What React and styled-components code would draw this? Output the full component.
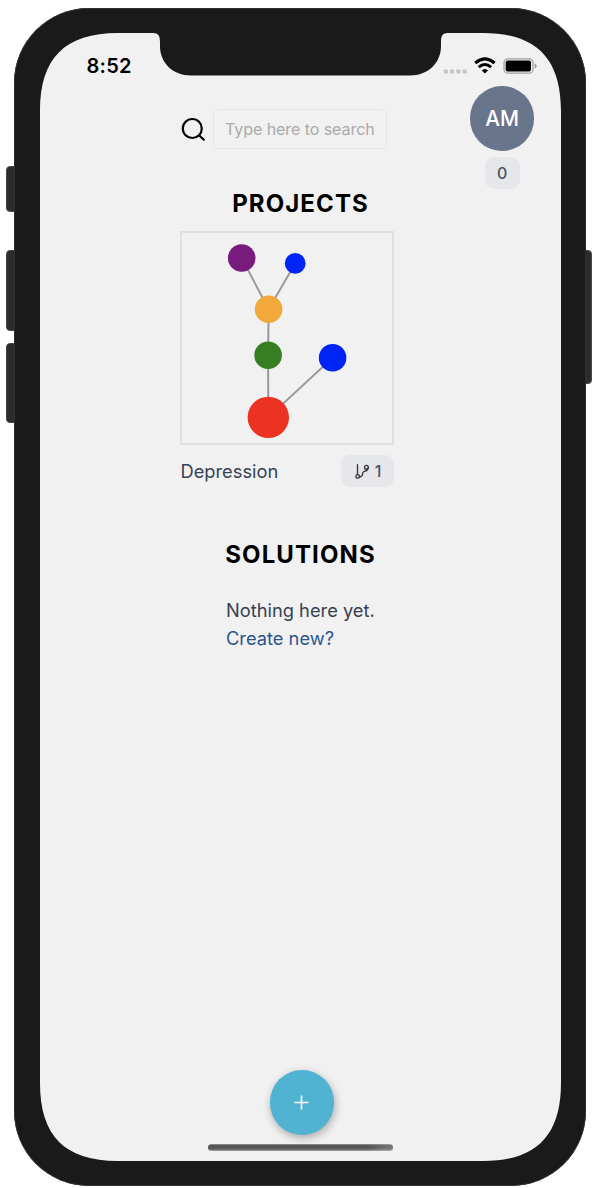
import React from "react";
import styled, { createGlobalStyle } from "styled-components";

const GlobalStyle = createGlobalStyle`
  *, *::before, *::after { box-sizing: border-box; }
  body { margin: 0; background: #fff; font-family: Inter, "Liberation Sans", sans-serif; }
`;

const Stage = styled.main`
  position: relative;
  width: 600px;
  height: 1188px;
  padding: 8px 14.3px 0;
  overflow: hidden;
`;

const SideButton = styled.span`
  position: absolute;
  top: ${(p) => p.$top}px;
  ${(p) => p.$side}: ${(p) => (p.$side === "left" ? 6.3 : 7.6)}px;
  width: 14px;
  height: ${(p) => p.$height}px;
  border: 1px solid #484848;
  border-radius: 4px;
  background: #2c2c2c;
`;

const Bezel = styled.div`
  position: relative;
  width: 571.4px;
  height: 1177.500px;
  padding: 25px 0 0 25.7px;
  border-radius: 75px;
  background: #1a1a1a;
  box-shadow: inset 0 0 0 0.7px #3a3a3a;
`;

const Screen = styled.div`
  display: flex;
  flex-direction: column;
  width: 521px;
  height: 1128px;
  background: #f1f1f1;
  clip-path: path("M0 78 C0 25 25 0 78 0 H113 C118.500 0 120 3 120 9 V13 C120 30 133 42.500 151 42.500 H370 C388 42.500 401 30 401 13 V9 C401 3 402.500 0 408 0 H443 C496 0 521 25 521 78 V1050 C521 1103 496 1128 443 1128 H78 C25 1128 0 1103 0 1050 Z");
`;

const StatusBar = styled.div`
  display: flex;
  justify-content: space-between;
  align-items: flex-start;
  height: 53px;
  padding: 21px 24px 0 46.500px;
`;

const Time = styled.span`
  font-size: 20px;
  font-weight: 600;
  line-height: 25px;
  letter-spacing: 0.25px;
  color: #000;
`;

const Indicators = styled.div`
  display: flex;
  height: 24px;
  align-items: center;
`;

const Header = styled.header`
  display: flex;
  justify-content: space-between;
  align-items: flex-start;
  height: 103px;
  padding: 0 26.700px 0 141px;
`;

const Search = styled.label`
  display: flex;
  align-items: center;
  gap: 7px;
  margin-top: 23px;
`;

const SearchInput = styled.input`
  width: 174px;
  height: 40px;
  padding: 0 0 1px 11px;
  border: 1.500px solid #e6e6e6;
  border-radius: 5px;
  outline: none;
  background: transparent;
  font-family: inherit;
  font-size: 16px;
  letter-spacing: -0.060px;
  &::placeholder { color: #aaa; opacity: 1; }
`;

const Profile = styled.div`
  display: flex;
  flex-direction: column;
  align-items: center;
  gap: 6.300px;
`;

const Avatar = styled.div`
  display: grid;
  place-items: center;
  width: 64.200px;
  height: 64.200px;
  margin-top: 0.400px;
  border-radius: 50%;
  background: #69758b;
  color: #fff;
  font-size: 20.800px;
  font-weight: 500;
`;

const Badge = styled.span`
  display: flex;
  align-items: center;
  justify-content: center;
  gap: 5px;
  width: ${(p) => p.$width}px;
  height: 32px;
  border-radius: 9px;
  background: #e5e7eb;
  color: #4b5563;
  font-size: 16px;
  font-weight: 500;
`;

const Section = styled.section`
  display: flex;
  flex-direction: column;
  align-items: center;
  padding-top: ${(p) => p.$top}px;
`;

const Heading = styled.h2`
  margin: 0;
  font-size: 24px;
  line-height: 30px;
  font-weight: 700;
  letter-spacing: 1.100px;
  color: #000;
`;

const Project = styled.article`
  width: 214px;
  margin: 12px 26px 0 0;
`;

const Preview = styled.div`
  height: 214px;
  border: 2px solid #e0e0e0;
`;

const ProjectMeta = styled.div`
  display: flex;
  justify-content: space-between;
  align-items: center;
  margin-top: 10px;
  color: #374151;
  font-size: 18.300px;
`;

const ProjectName = styled.span`
  padding-bottom: 1px;
`;

const Empty = styled.div`
  display: flex;
  flex-direction: column;
  width: 149px;
  margin-top: 26.500px;
  color: #374151;
  font-size: 18.300px;
  line-height: 28px;
  white-space: nowrap;
`;

const CreateLink = styled.a`
  color: #2a5590;
`;

const Footer = styled.footer`
  display: flex;
  flex-direction: column;
  align-items: center;
  gap: 9px;
  margin-top: auto;
  padding-bottom: 10.500px;
`;

const AddButton = styled.button`
  display: grid;
  place-items: center;
  width: 64.500px;
  height: 64.500px;
  margin-left: 3px;
  padding: 0;
  border: 0;
  border-radius: 50%;
  background: #50b3d2;
  box-shadow: 1px 3px 8px rgba(0, 0, 0, 0.3);
`;

const HomeIndicator = styled.div`
  width: 185.500px;
  height: 7px;
  border-radius: 4px;
  background: linear-gradient(90deg, transparent 85%, rgba(241,241,241,.22)), linear-gradient(#999, #4d4d4d 25%, #626262 75%, #aaa);
`;

const nodes = [
  { x: 241.7, y: 258, r: 13.8, fill: "#771b7d" },
  { x: 295.2, y: 263.4, r: 10.4, fill: "#0024f5" },
  { x: 268.6, y: 309.3, r: 13.8, fill: "#f3a83b" },
  { x: 268.1, y: 355.2, r: 13.8, fill: "#377e22" },
  { x: 332.6, y: 357.7, r: 13.8, fill: "#0024f5" },
  { x: 268.3, y: 417.4, r: 20.7, fill: "#eb3223" },
];
const edges = [[0, 2], [1, 2], [2, 3], [3, 5], [4, 5]];

function ProjectTree() {
  return (
    <svg width="210" height="210" viewBox="182 233 210 210" style={{ display: "block" }}>
      {edges.map(([a, b]) => (
        <line key={`${a}-${b}`} x1={nodes[a].x} y1={nodes[a].y} x2={nodes[b].x} y2={nodes[b].y} stroke="#969696" strokeWidth="1.900" />
      ))}
      {nodes.map((n) => (
        <circle key={`${n.x}-${n.y}`} cx={n.x} cy={n.y} r={n.r} fill={n.fill} />
      ))}
    </svg>
  );
}

function StatusIcons() {
  return (
    <svg width="94" height="24" viewBox="443 54 94 24" fill="none">
      {[443.7, 450, 456.3, 462.6].map((x) => (
        <rect key={x} x={x} y="69.500" width="4.200" height="4" rx="1" fill="#c4c4c4" />
      ))}
      <path d="M475.200 63 Q484.900 54.800 494.600 63" stroke="#000" strokeWidth="3" />
      <path d="M478.700 67.200 Q484.900 61.700 491.100 67.200" stroke="#000" strokeWidth="2.900" />
      <path d="M481.800 70.400 Q484.900 67.400 488 70.400 L484.900 73.500 Z" fill="#000" />
      <rect x="504" y="58.800" width="29" height="14.400" rx="4" stroke="#a0a0a0" strokeWidth="1.300" />
      <rect x="505.700" y="60.500" width="25.300" height="11" rx="2" fill="#000" />
      <path d="M534.700 63.500 Q536.700 64.200 536.700 66 Q536.700 67.800 534.700 68.500 Z" fill="#999" />
    </svg>
  );
}

function SearchIcon() {
  return (
    <svg width="25" height="25" viewBox="0 0 25 25" fill="none" stroke="#000" strokeWidth="2.200" strokeLinecap="round">
      <circle cx="11.300" cy="11.500" r="9.500" />
      <path d="m18.300 18.500 4.500 4.200" />
    </svg>
  );
}

function BranchIcon() {
  return (
    <svg width="15" height="15" viewBox="0 0 15 15" fill="none" stroke="#333" strokeWidth="1.300" strokeLinecap="round">
      <path d="M2.500 0.700v9.600M4.500 13C9.500 12.600 6.200 9 8.600 7.700C10.500 6.700 13 7 13.300 3.600" />
      <circle cx="2.700" cy="12.400" r="1.800" />
      <circle cx="11.400" cy="3.200" r="1.900" />
    </svg>
  );
}

function PlusIcon() {
  return (
    <svg width="15" height="15" viewBox="0 0 15 15" fill="none" stroke="#fff" strokeWidth="1.600">
      <path d="M7.500 0.500v14M0.500 7.500h14" />
    </svg>
  );
}

export default function App() {
  return (
    <Stage>
      <GlobalStyle />
      <SideButton $side="left" $top={166} $height={46} />
      <SideButton $side="left" $top={250} $height={81} />
      <SideButton $side="left" $top={342.5} $height={80.5} />
      <SideButton $side="right" $top={250} $height={134} />
      <Bezel>
        <Screen>
          <StatusBar>
            <Time>8:52</Time>
            <Indicators><StatusIcons /></Indicators>
          </StatusBar>
          <Header>
            <Search>
              <SearchIcon />
              <SearchInput placeholder="Type here to search" />
            </Search>
            <Profile>
              <Avatar>AM</Avatar>
              <Badge $width={35}>0</Badge>
            </Profile>
          </Header>
          <Section $top={0}>
            <Heading>PROJECTS</Heading>
            <Project>
              <Preview><ProjectTree /></Preview>
              <ProjectMeta>
                <ProjectName>Depression</ProjectName>
                <Badge $width={53}><BranchIcon />1</Badge>
              </ProjectMeta>
            </Project>
          </Section>
          <Section $top={52.5}>
            <Heading>SOLUTIONS</Heading>
            <Empty>
              <span>Nothing here yet.</span>
              <CreateLink>Create new?</CreateLink>
            </Empty>
          </Section>
          <Footer>
            <AddButton aria-label="Add"><PlusIcon /></AddButton>
            <HomeIndicator />
          </Footer>
        </Screen>
      </Bezel>
    </Stage>
  );
}
